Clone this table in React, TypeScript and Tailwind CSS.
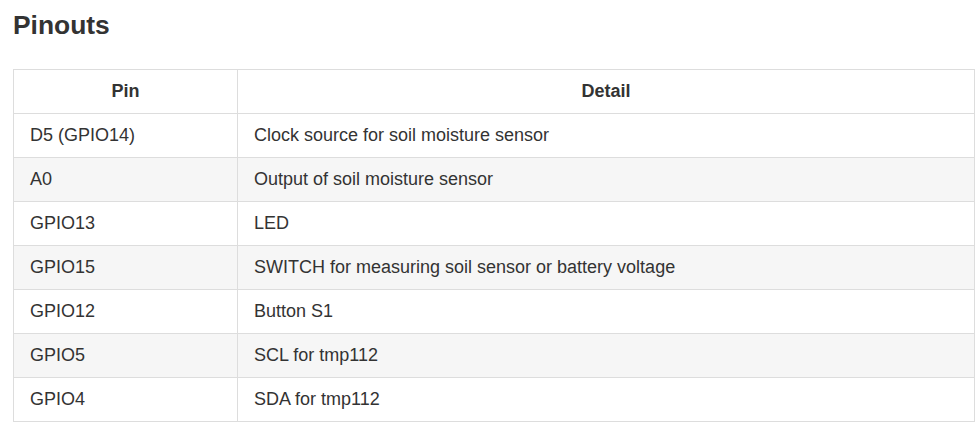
import React from "react";

const rows: [string, string][] = [
  ["D5 (GPIO14)", "Clock source for soil moisture sensor"],
  ["A0", "Output of soil moisture sensor"],
  ["GPIO13", "LED"],
  ["GPIO15", "SWITCH for measuring soil sensor or battery voltage"],
  ["GPIO12", "Button S1"],
  ["GPIO5", "SCL for tmp112"],
  ["GPIO4", "SDA for tmp112"],
];

export default function App() {
  return (
    <div
      className="w-[978px] h-[429px] bg-white text-[#333333] px-[13px] pt-[11px]"
      style={{ fontFamily: '"Liberation Sans", Arial, sans-serif' }}
    >
      <h2 className="text-[26.4px] font-bold leading-[1.1] m-0">Pinouts</h2>
      <table className="mt-[29px] w-[962px] border-collapse border border-[#dddddd] text-[18px]">
        <thead>
          <tr className="h-[44px]">
            <th className="w-[224px] border border-[#dddddd] px-4 font-bold text-center align-middle">Pin</th>
            <th className="border border-[#dddddd] px-4 font-bold text-center align-middle">Detail</th>
          </tr>
        </thead>
        <tbody>
          {rows.map(([pin, detail], i) => (
            <tr key={pin} className={`h-[44px] ${i % 2 === 1 ? "bg-[#f6f6f6]" : "bg-white"}`}>
              <td className="border border-[#dddddd] px-4 align-middle">{pin}</td>
              <td className="border border-[#dddddd] px-4 align-middle">{detail}</td>
            </tr>
          ))}
        </tbody>
      </table>
    </div>
  );
}
